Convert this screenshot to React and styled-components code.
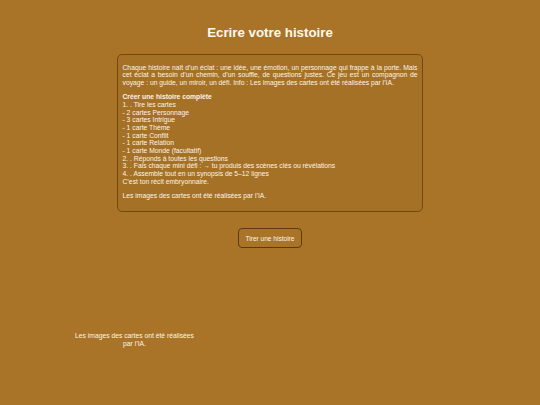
import React from 'react';
import styled, { createGlobalStyle } from 'styled-components';

const GlobalStyle = createGlobalStyle`
  html,
  body {
    margin: 0;
    padding: 0;
    background: #a97428;
  }
  body {
    font-family: 'Liberation Sans', Arial, sans-serif;
    color: #fdf4e4;
  }
`;

const Page = styled.div`
  min-height: 405px;
  padding-top: 25px;
  box-sizing: border-box;
`;

const Title = styled.h1`
  margin: 0;
  font-size: 13.3px;
  line-height: 16px;
  font-weight: 700;
  text-align: center;
  color: #fff8ee;
`;

const Intro = styled.section`
  width: 306px;
  box-sizing: border-box;
  margin: 13px auto 0;
  padding: 1.5px 4.5px 4px;
  border: 1px solid #74490f;
  border-radius: 5px;
  background: rgba(0, 0, 0, 0.02);
  font-size: 6.75px;
  line-height: 7.65px;
  text-align: justify;
`;

const Para = styled.p`
  margin: 7px 0;
`;

const Actions = styled.div`
  display: flex;
  justify-content: center;
  margin-top: 16px;
`;

const DrawButton = styled.button`
  padding: 5.5px 7px;
  border: 1.5px solid #5e3a0c;
  border-radius: 4px;
  background: transparent;
  color: #fdf4e4;
  font-family: 'Liberation Sans', Arial, sans-serif;
  font-size: 6.55px;
  cursor: pointer;
`;

const Footer = styled.footer`
  width: 125px;
  margin: 84px 0 0 72px;
  font-size: 6.75px;
  line-height: 8px;
  text-align: center;
`;

const steps = [
  '1. . Tire les cartes',
  '- 2 cartes Personnage',
  '- 3 cartes Intrigue',
  '- 1 carte Thème',
  '- 1 carte Conflit',
  '- 1 carte Relation',
  '- 1 carte Monde (facultatif)',
  '2. . Réponds à toutes les questions',
  '3. . Fais chaque mini défi : → tu produis des scènes clés ou révélations',
  '4. . Assemble tout en un synopsis de 5–12 lignes',
  'C’est ton récit embryonnaire.',
];

const App = () => (
  <>
    <GlobalStyle />
    <Page>
      <Title>Ecrire votre histoire</Title>
      <Intro>
        <Para>
          Chaque histoire naît d’un éclat : une idée, une émotion, un personnage qui frappe à la porte. Mais cet
          éclat a besoin d’un chemin, d’un souffle, de questions justes. Ce jeu est un compagnon de voyage : un
          guide, un miroir, un défi. Info : Les images des cartes ont été réalisées par l’IA.
        </Para>
        <Para>
          <strong>Créer une histoire complète</strong>
          {steps.map(step => (
            <React.Fragment key={step}>
              <br />
              {step}
            </React.Fragment>
          ))}
        </Para>
        <Para>Les images des cartes ont été réalisées par l’IA.</Para>
      </Intro>
      <Actions>
        <DrawButton type="button">Tirer une histoire</DrawButton>
      </Actions>
      <Footer>Les images des cartes ont été réalisées par l’IA.</Footer>
    </Page>
  </>
);

export default App;
